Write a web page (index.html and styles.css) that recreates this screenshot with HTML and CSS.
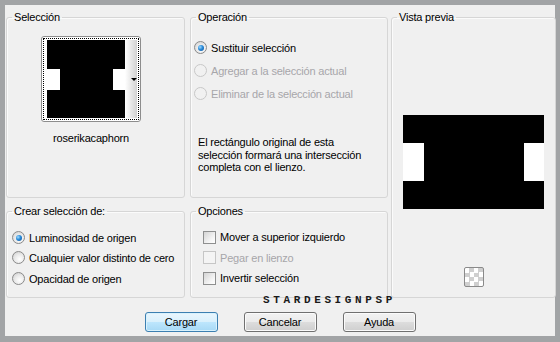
FILE: index.html
```html
<!DOCTYPE html>
<html>
<head>
	<title>Cargar selección</title>
	<link rel="stylesheet" href="styles.css">
</head>
<body>
	<div class="dialog">
		<div class="panels">
			<fieldset class="box sel">
				<legend>Selección</legend>
				<div class="pick">
					<div class="thumb">
						<div class="dots">
							<div class="shape small">
								<span class="hole l"></span>
								<span class="hole r"></span>
							</div>
							<div class="strip"><span class="arrow"></span></div>
						</div>
					</div>
					<div class="pick-name">roserikacaphorn</div>
				</div>
			</fieldset>

			<fieldset class="box op">
				<legend>Operación</legend>
				<div class="opts">
					<label class="row"><span class="radio on"></span>Sustituir selección</label>
					<label class="row off"><span class="radio"></span>Agregar a la selección actual</label>
					<label class="row off"><span class="radio"></span>Eliminar de la selección actual</label>
				</div>
				<p class="note">El rectángulo original de esta<br>selección formará una intersección<br>completa con el lienzo.</p>
			</fieldset>

			<fieldset class="box preview">
				<legend>Vista previa</legend>
				<div class="shape big">
					<span class="hole l"></span>
					<span class="hole r"></span>
				</div>
				<div class="checker"></div>
			</fieldset>

			<fieldset class="box make">
				<legend>Crear selección de:</legend>
				<div class="opts">
					<label class="row"><span class="radio on"></span>Luminosidad de origen</label>
					<label class="row"><span class="radio"></span>Cualquier valor distinto de cero</label>
					<label class="row"><span class="radio"></span>Opacidad de origen</label>
				</div>
			</fieldset>

			<fieldset class="box extra">
				<legend>Opciones</legend>
				<div class="opts">
					<label class="row"><span class="check"></span>Mover a superior izquierdo</label>
					<label class="row off"><span class="check"></span>Pegar en lienzo</label>
					<label class="row"><span class="check"></span>Invertir selección</label>
				</div>
			</fieldset>
		</div>

		<div class="mark">STARDESIGNPSP</div>

		<div class="buttons">
			<button class="btn main">Cargar</button>
			<button class="btn">Cancelar</button>
			<button class="btn">Ayuda</button>
		</div>
	</div>
</body>
</html>
```

FILE: styles.css
```css
html, body {
	margin: 0;
	background: #a2a4a6;
	font-family: "Liberation Sans", Arial, sans-serif;
	font-size: 11px;
	letter-spacing: -0.2px;
	color: #000;
}
.dialog {
	position: relative;
	margin: 5px 0 0 5px;
	width: 550px;
	height: 331px;
	background: #f0f0f0;
	display: flex;
	flex-direction: column;
}
.panels {
	display: grid;
	grid-template-columns: 179px 197px 164px;
	grid-template-rows: 187px 93px;
	column-gap: 5px;
	row-gap: 7px;
	padding: 6px 0 0 1px;
}
.box {
	margin: 0;
	padding: 0;
	border: 1px solid #d6d6d6;
	border-radius: 3px;
	box-shadow: inset 1px 1px 0 #fbfbfb;
	min-width: 0;
}
.op, .extra {
	margin-right: -1px;
}
.preview {
	grid-row: 1 / 3;
	grid-column: 3;
	margin-left: -1px;
	display: flex;
	flex-direction: column;
	align-items: center;
}
legend {
	margin-left: 5px;
	padding: 0 2px;
	line-height: 13px;
}

/* selection thumbnail */
.pick {
	width: 100px;
	margin: 12px 0 0 34px;
}
.thumb {
	border: 1px solid #8d8d8d;
	border-radius: 3px;
	background: #fff;
	padding: 1px;
}
.dots {
	display: flex;
	border: 1px dotted #000;
	padding: 1px 1px 1px 3px;
}
.shape {
	background: #000;
	display: flex;
	align-items: center;
	justify-content: space-between;
}
.shape.small {
	width: 79px;
	height: 78px;
}
.shape.small .hole {
	height: 21px;
	width: 13px;
}
.shape.small .hole.r {
	width: 12px;
}
.hole {
	background: #fff;
}
.strip {
	width: 12px;
	background: linear-gradient(to right, #ffffff, #d2d2d2);
	display: flex;
	align-items: center;
	justify-content: flex-end;
}
.arrow {
	width: 0;
	height: 0;
	border-left: 3px solid transparent;
	border-right: 3px solid transparent;
	border-top: 3px solid #000;
}
.pick-name {
	text-align: center;
	margin-top: 10px;
	line-height: 13px;
}

/* options */
.opts {
	display: flex;
	flex-direction: column;
}
.op .opts {
	margin-top: 12px;
	padding-left: 3px;
}
.op .row {
	height: 23px;
}
.make .opts {
	margin-top: 10px;
	padding-left: 5px;
}
.make .row:first-child {
	height: 19px;
}
.make .row {
	height: 21px;
}
.extra .opts {
	margin-top: 9px;
	padding-left: 12px;
}
.extra .row {
	height: 20px;
}
.extra .row:nth-child(2) {
	height: 21px;
}
.row {
	display: flex;
	align-items: center;
	gap: 4px;
	white-space: nowrap;
}
.row.off {
	color: #a7a6aa;
}
.radio {
	width: 11px;
	height: 11px;
	border: 1px solid #8a8a8a;
	border-radius: 50%;
	background: radial-gradient(circle at 60% 65%, #ffffff 0, #e9e9e9 50%, #c9c9c9 100%);
	display: flex;
	align-items: center;
	justify-content: center;
	flex: none;
}
.radio.on::after {
	content: "";
	width: 6px;
	height: 6px;
	border-radius: 50%;
	background: radial-gradient(circle at 35% 35%, #9fdcff 0, #2a8ad8 45%, #0b4f97 100%);
}
.off .radio {
	border-color: #c8c8c8;
	background: #f1f1f1;
}
.check {
	width: 11px;
	height: 11px;
	border: 1px solid #8e8f8f;
	background: linear-gradient(135deg, #d4d4d4, #f6f6f6 70%, #ffffff);
	flex: none;
}
.off .check {
	border-color: #c6c6c6;
	background: #f4f4f4;
}
.note {
	margin: 31px 0 0 7px;
	line-height: 12.5px;
}

/* preview */
.shape.big {
	width: 141px;
	height: 94px;
	margin-top: 91px;
}
.shape.big .hole {
	width: 21px;
	height: 38px;
}
.shape.big .hole.r {
	width: 20px;
}
.checker {
	width: 18px;
	height: 18px;
	margin-top: 58px;
	border: 1px solid #8a8a8a;
	border-radius: 2px;
	background-color: #fff;
	background-image: conic-gradient(#cfcfcf 25%, #fff 0 50%, #cfcfcf 0 75%, #fff 0);
	background-size: 9px 9px;
}

/* watermark */
.mark {
	position: absolute;
	left: 258px;
	top: 290px;
	font-family: "Liberation Mono", monospace;
	font-size: 10px;
	font-weight: bold;
	letter-spacing: 3.3px;
	transform: scaleX(1.1);
	transform-origin: left;
	color: #1a1a1a;
}

/* buttons */
.buttons {
	display: flex;
	justify-content: center;
	gap: 26px;
	margin-top: 14px;
}
.btn {
	width: 73px;
	height: 20px;
	padding: 0;
	font: inherit;
	letter-spacing: inherit;
	color: #000;
	border: 1px solid #707070;
	border-radius: 3px;
	background: linear-gradient(#f2f2f2 0, #ebebeb 50%, #dddddd 50%, #cfcfcf 100%);
	box-shadow: inset 0 0 0 1px #fbfbfb;
}
.btn.main {
	border-color: #3c7fb1;
	background: linear-gradient(#eaf6fd 0, #d9f0fc 50%, #bee6fd 50%, #a7d9f5 100%);
	box-shadow: inset 0 0 0 1px #d9f2fd;
}
```
